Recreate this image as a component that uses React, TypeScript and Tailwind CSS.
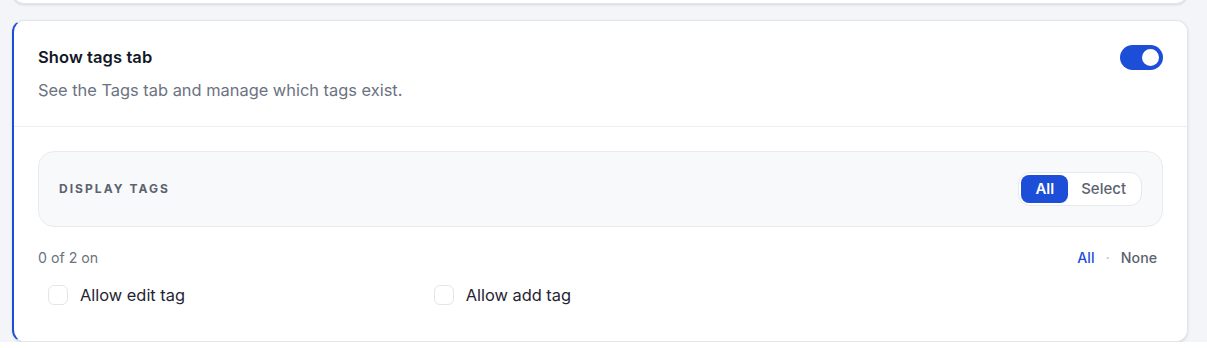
export default function App() {
  return (
    <div className="min-h-[348px] w-full bg-[#f4f5f9] font-['Inter',sans-serif]">
      <div className="ml-3 mr-[19px] -mt-4 h-5 rounded-b-xl border border-t-0 border-[#e3e5ec] bg-white shadow-sm" />
      <div className="ml-3 mr-[19px] mt-4 overflow-hidden rounded-xl border border-l-2 border-[#e3e5ec] border-l-[#1d4ed8] bg-white shadow-sm">
        <div className="flex items-start justify-between px-6 pb-6 pt-6">
          <div>
            <div className="text-[16.5px] font-semibold leading-6 tracking-[0.005em] text-[#111827]">Show tags tab</div>
            <div className="mt-[9px] text-[16.4px] leading-6 text-[#6b7280]">See the Tags tab and manage which tags exist.</div>
          </div>
          <button className="flex h-[25px] w-[43px] items-center rounded-full bg-[#1d4ed8] p-[2px]">
            <span className="ml-auto h-[21px] w-[21px] rounded-full border-2 border-[#1d4ed8] bg-white" />
          </button>
        </div>
        <div className="border-t border-[#eceef2] px-6 pb-[26px] pt-6">
          <div className="flex items-center justify-between rounded-2xl border border-[#e8eaef] bg-[#f8f9fb] px-5 py-5">
            <span className="text-[12px] font-bold uppercase tracking-[0.17em] text-[#5b6270]">Display tags</span>
            <div className="flex items-center rounded-xl border border-[#e6e8ee] bg-white p-[2px]">
              <span className="rounded-lg bg-[#1d4ed8] px-[14px] py-[4px] text-[15px] font-semibold leading-5 text-white">All</span>
              <span className="px-[13px] py-[4px] text-[15px] font-medium leading-5 text-[#5b6270]">Select</span>
            </div>
          </div>
          <div className="mt-[21px] flex items-center justify-between text-[14.2px] leading-5">
            <span className="text-[#6b7280]">0 of 2 on</span>
            <div className="mr-[6px] flex items-center gap-[11px] font-medium">
              <span className="text-[#1d4ed8]">All</span>
              <span className="text-[#c4c8d0]">·</span>
              <span className="text-[#5b6270]">None</span>
            </div>
          </div>
          <div className="mt-[7px] grid grid-cols-3 gap-8">
            {["Allow edit tag", "Allow add tag"].map((t) => (
              <label key={t} className="flex items-center gap-3 px-2.5 py-2">
                <span className="h-5 w-5 rounded-md border border-[#e3e5ea] bg-white" />
                <span className="text-[16.4px] leading-6 text-[#1f2533]">{t}</span>
              </label>
            ))}
          </div>
        </div>
      </div>
    </div>
  );
}
